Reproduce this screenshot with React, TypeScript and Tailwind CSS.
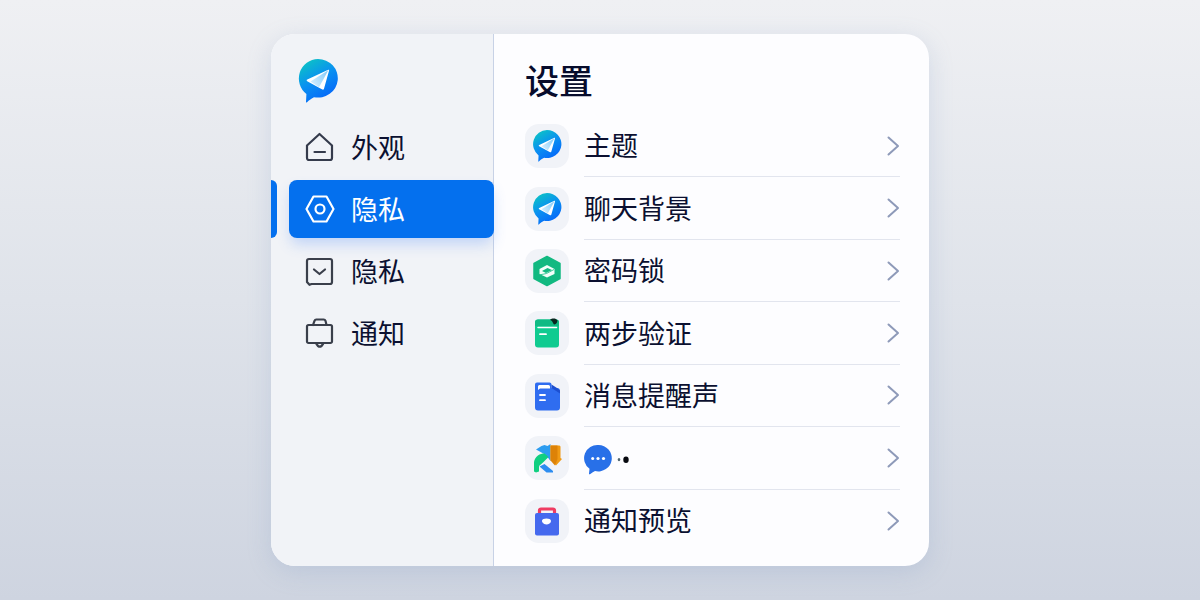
import React from 'react';

type IconProps = { className?: string };

const PlaneBubble: React.FC<IconProps & { id: string }> = ({ className, id }) => (
  <svg viewBox="0 0 40 44" className={className} aria-hidden="true">
    <defs>
      <linearGradient id={id} x1="0.2" y1="0" x2="0.75" y2="1">
        <stop offset="0" stopColor="#0cc4c4" />
        <stop offset="0.45" stopColor="#0a92f0" />
        <stop offset="1" stopColor="#0560fb" />
      </linearGradient>
      <linearGradient id={`${id}-wing`} x1="0" y1="0.8" x2="1" y2="0.2">
        <stop offset="0" stopColor="#d6eefe" />
        <stop offset="1" stopColor="#86cdfa" />
      </linearGradient>
    </defs>
    <path
      d="M20 0a19.800 19.300 0 1 1-4 38.200c-2.400 1-4.900 3-7.200 5.200-.5.400-.9.100-.8-.5l.4-8A19.500 19.500 0 0 1 20 0Z"
      fill={`url(#${id})`}
    />
    <path d="M30.200 10.800c.6-.3 1 .1.900.7L26 29.700c-.3.900-.9 1.100-1.700.8L9.200 22.200c-.8-.5-.7-1.200.1-1.600Z" fill="#fff" />
    <path d="M30.500 11 12.500 22.500l8.500 5.700Z" fill={`url(#${id}-wing)`} />
  </svg>
);

const HomeIcon: React.FC<IconProps> = ({ className }) => (
  <svg viewBox="0 0 30 30" className={className} fill="none" stroke="#353b4c" strokeWidth="2.200" strokeLinejoin="round" strokeLinecap="round" aria-hidden="true">
    <path d="M2 13.500 14.500 2 27 13.500V26a2 2 0 0 1-2 2H4a2 2 0 0 1-2-2Z" />
    <path d="M9.500 20h10.500" />
  </svg>
);

const HexIcon: React.FC<IconProps> = ({ className }) => (
  <svg viewBox="0 0 30 30" className={className} fill="none" stroke="#fff" strokeWidth="2.200" strokeLinejoin="round" aria-hidden="true">
    <path d="M8.500 2.500h13L28.500 15l-7 12.500h-13L1.500 15Z" />
    <circle cx="15" cy="15" r="4.500" />
  </svg>
);

const CheckBoxIcon: React.FC<IconProps> = ({ className }) => (
  <svg viewBox="0 0 30 30" className={className} fill="none" stroke="#3a3f4b" strokeWidth="2.200" strokeLinejoin="round" strokeLinecap="round" aria-hidden="true">
    <path d="M4 3h21a2 2 0 0 1 2 2v21a2 2 0 0 1-2 2H6.500l-2 .8L2 26V5a2 2 0 0 1 2-2Z" />
    <path d="m9 13.500 5.500 4.500 5.500-4.500" />
  </svg>
);

const BellIcon: React.FC<IconProps> = ({ className }) => (
  <svg viewBox="0 0 30 30" className={className} fill="none" stroke="#3a3f4b" strokeWidth="2.200" strokeLinejoin="round" strokeLinecap="round" aria-hidden="true">
    <path d="M3.500 7h22A1.500 1.500 0 0 1 27 8.500v15a1.500 1.500 0 0 1-1.500 1.500h-22A1.500 1.500 0 0 1 2 23.500v-15A1.500 1.500 0 0 1 3.500 7Z" />
    <path d="M8 7l1.500-4.200a2 2 0 0 1 2-1.300h7a2 2 0 0 1 2 1.300L21.500 7M11.500 26l1.500 2a3 3 0 0 0 3.500 0l1.500-2" />
  </svg>
);

const ShieldIcon: React.FC<IconProps> = ({ className }) => (
  <svg viewBox="0 0 30 32" className={className} aria-hidden="true">
    <path d="M15 1.500 28 8.500v15L15 30.500 2 23.500v-15Z" fill="#12b981" stroke="#12b981" strokeWidth="1.500" strokeLinejoin="round" />
    <path d="M7.500 14 15 10l7.500 4v5L15 22.500 7.500 19Z" fill="#f2fffa" />
    <path d="m10 16 5.500-3 4.500 2-6 3Z" fill="#12b981" />
    <path d="m8 19.800 6.500-1.300 7.500-4" fill="none" stroke="#12b981" strokeWidth="0.800" />
  </svg>
);

const WalletIcon: React.FC<IconProps> = ({ className }) => (
  <svg viewBox="0 0 30 32" className={className} aria-hidden="true">
    <rect x="3" y="2.500" width="24" height="28" rx="3" fill="#0fcb90" />
    <path d="M6 2.500h18a3 3 0 0 1 3 3V9H3V5.500a3 3 0 0 1 3-3Z" fill="#10ba84" />
    <path d="M6 10.500h18.500" stroke="#fff" strokeWidth="1.500" strokeLinecap="round" />
    <path d="M8 17.200h6" stroke="#fff" strokeWidth="1.800" strokeLinecap="round" />
    <path d="M18 2.800c2-1.800 6-2 7.500.8-.3 2.200-1.300 3.900-3 3.900s-1-3.200-4.500-4.700Z" fill="#08271f" />
  </svg>
);

const DocIcon: React.FC<IconProps> = ({ className }) => (
  <svg viewBox="0 0 30 32" className={className} aria-hidden="true">
    <path d="M5 2.500h12.500a2 2 0 0 1 2 2V8H25a3 3 0 0 1 3 3v16.500a3 3 0 0 1-3 3H6a3 3 0 0 1-3-3V4.500a2 2 0 0 1 2-2Z" fill="#2f6df0" />
    <path d="M19.500 8V4.500L25 8l3 2.500v3Z" fill="#1d4fd0" />
    <path d="M6 6.500A1.500 1.500 0 0 1 7.500 5h9A1.500 1.500 0 0 1 18 6.500V8.500H8L6 10Z" fill="#fff" />
    <path d="M8 15h5M8 20.200h5" stroke="#fff" strokeWidth="1.800" strokeLinecap="round" />
  </svg>
);

const ArrowsIcon: React.FC<IconProps> = ({ className }) => (
  <svg viewBox="0 0 30 32" className={className} aria-hidden="true">
    <path d="M4 7.500 9.500 4l3-1 3 1L18.500 2v17c-3-4.500-6-7-9-8.500Z" fill="#2c9cf0" />
    <path d="M2 29.500V20C3 14 8 11.500 12.500 11.500l4 3.500-5.500 5.500L7 24v5.500L4 30.500Z" fill="#10cf80" />
    <path d="M7.500 24.500 12.500 22 21 29v1.500h-6.500Z" fill="#2c8cf0" />
    <path d="M18.500 3.500h9l1 1V16l1.500 1-6 6.500-5.500-6Z" fill="#f09a14" />
    <path d="M18.500 3.500h7V17L23 23.500l-4.500-5Z" fill="#dd8207" />
  </svg>
);

const BagIcon: React.FC<IconProps> = ({ className }) => (
  <svg viewBox="0 0 30 32" className={className} aria-hidden="true">
    <path d="M7.500 8V5.500a1.500 1.500 0 0 1 1.500-1.500h12a1.500 1.500 0 0 1 1.500 1.500V8" fill="none" stroke="#ef3c62" strokeWidth="3.200" />
    <rect x="3" y="8" width="24" height="22.500" rx="2" fill="#4569ee" />
    <path d="M10 15.500c0-2.500 9-3 9 .5 0 4-7 4.500-8 1.800-.8 0-1-1.200-1-2.300Z" fill="#fff" />
  </svg>
);

const ChatDots: React.FC = () => (
  <svg viewBox="0 -4 46 34" className="h-[34px] w-[46px]" aria-hidden="true">
    <path d="M14.500 0a13.500 13.200 0 1 1-3.500 26c-1.800.8-3.500 2-5 3.200-.8.400-1.200 0-1-.8l.5-4.600A13.200 13.200 0 0 1 14.500 0Z" fill="#2870e8" />
    <circle cx="8.700" cy="13.500" r="1.500" fill="#fff" />
    <circle cx="14" cy="13.500" r="1.600" fill="#fff" />
    <circle cx="19.500" cy="13.500" r="1.600" fill="#fff" />
    <ellipse cx="35" cy="14.600" rx="1.300" ry="1.700" fill="#51666f" />
    <ellipse cx="42" cy="14.800" rx="2.700" ry="3.200" fill="#07090f" />
  </svg>
);

const Chevron: React.FC = () => (
  <svg viewBox="0 0 14 22" className="h-[22px] w-3.5 shrink-0" fill="none" stroke="#8e9ab9" strokeWidth="2" strokeLinecap="round" strokeLinejoin="round" aria-hidden="true">
    <path d="m2.500 2.500 9.500 8.500-9.500 8.500" />
  </svg>
);

const navItems = [
  { id: 'appearance', label: '外观', icon: HomeIcon },
  { id: 'privacy', label: '隐私', icon: HexIcon, active: true },
  { id: 'privacy-lock', label: '隐私', icon: CheckBoxIcon },
  { id: 'notifications', label: '通知', icon: BellIcon },
];

const rowIcon = 'h-8 w-[30px]';

const rows = [
  { id: 'theme', label: '主题', icon: <PlaneBubble id="theme-plane" className={rowIcon} /> },
  { id: 'wallpaper', label: '聊天背景', icon: <PlaneBubble id="wallpaper-plane" className={rowIcon} /> },
  { id: 'passcode', label: '密码锁', icon: <ShieldIcon className={rowIcon} /> },
  { id: 'two-step', label: '两步验证', icon: <WalletIcon className={rowIcon} /> },
  { id: 'sound', label: '消息提醒声', icon: <DocIcon className={rowIcon} /> },
  { id: 'chat', label: null, icon: <ArrowsIcon className={rowIcon} /> },
  { id: 'preview', label: '通知预览', icon: <BagIcon className={rowIcon} /> },
];

const Sidebar: React.FC = () => (
  <aside className="w-[223px] shrink-0 border-r border-[#c8d2e6] bg-[#f1f3f7]">
    <PlaneBubble id="logo" className="mt-[25px] ml-[27px] h-11 w-10" />
    <nav className="mt-[15px]">
      <ul className="flex flex-col gap-1">
        {navItems.map(({ id, label, icon: Icon, active }) => (
          <li key={id} className="flex h-[58px]">
            <span className={active ? 'w-1.5 rounded-r-md bg-[#0470ee]' : 'w-1.5'} />
            <button
              type="button"
              aria-current={active ? 'page' : undefined}
              className={
                active
                  ? 'ml-3 -mr-px flex flex-1 items-center gap-4 rounded-lg bg-[#0470ee] pl-4 text-[27px] text-white shadow-[0_8px_14px_-2px_rgba(80,140,250,0.3)]'
                  : 'ml-3 flex flex-1 items-center gap-4 rounded-lg pl-4 text-[27px] text-[#0b1030]'
              }
            >
              <Icon className="size-[30px] shrink-0" />
              {label}
            </button>
          </li>
        ))}
      </ul>
    </nav>
  </aside>
);

const App: React.FC = () => {
  return (
    <div className="flex min-h-screen items-center justify-center bg-linear-to-b from-[#eff0f3] via-[#dfe3ea] to-[#ced4e0] font-['Noto_Sans_CJK_SC',sans-serif]">
      <div className="flex min-h-[532px] w-full max-w-[658px] overflow-hidden rounded-3xl bg-[#fdfdff] shadow-[0_6px_24px_rgba(120,145,190,0.22)]">
        <Sidebar />
        <main className="flex min-w-0 flex-1 flex-col pt-[26px] pr-[29px] pb-3.5 pl-[31px]">
          <h1 className="text-[34px] leading-10 font-medium text-[#070c2c]">设置</h1>
          <ul className="mt-[15px] flex flex-1 flex-col">
            {rows.map(({ id, label, icon }, i) => (
              <li key={id} className="flex-1">
                <button type="button" aria-label={label ?? '聊天'} className="flex h-full w-full items-center gap-[15px] text-left">
                  <span className="flex size-11 shrink-0 items-center justify-center rounded-[14px] bg-[#f1f3f8]">
                    {icon}
                  </span>
                  <span
                    className={
                      i < rows.length - 1
                        ? 'flex flex-1 items-center justify-between self-stretch border-b border-[#e2e5ee]'
                        : 'flex flex-1 items-center justify-between self-stretch'
                    }
                  >
                    {label ? <span className="text-[27px] text-[#0b1030]">{label}</span> : <ChatDots />}
                    <Chevron />
                  </span>
                </button>
              </li>
            ))}
          </ul>
        </main>
      </div>
    </div>
  );
};

export default App;
